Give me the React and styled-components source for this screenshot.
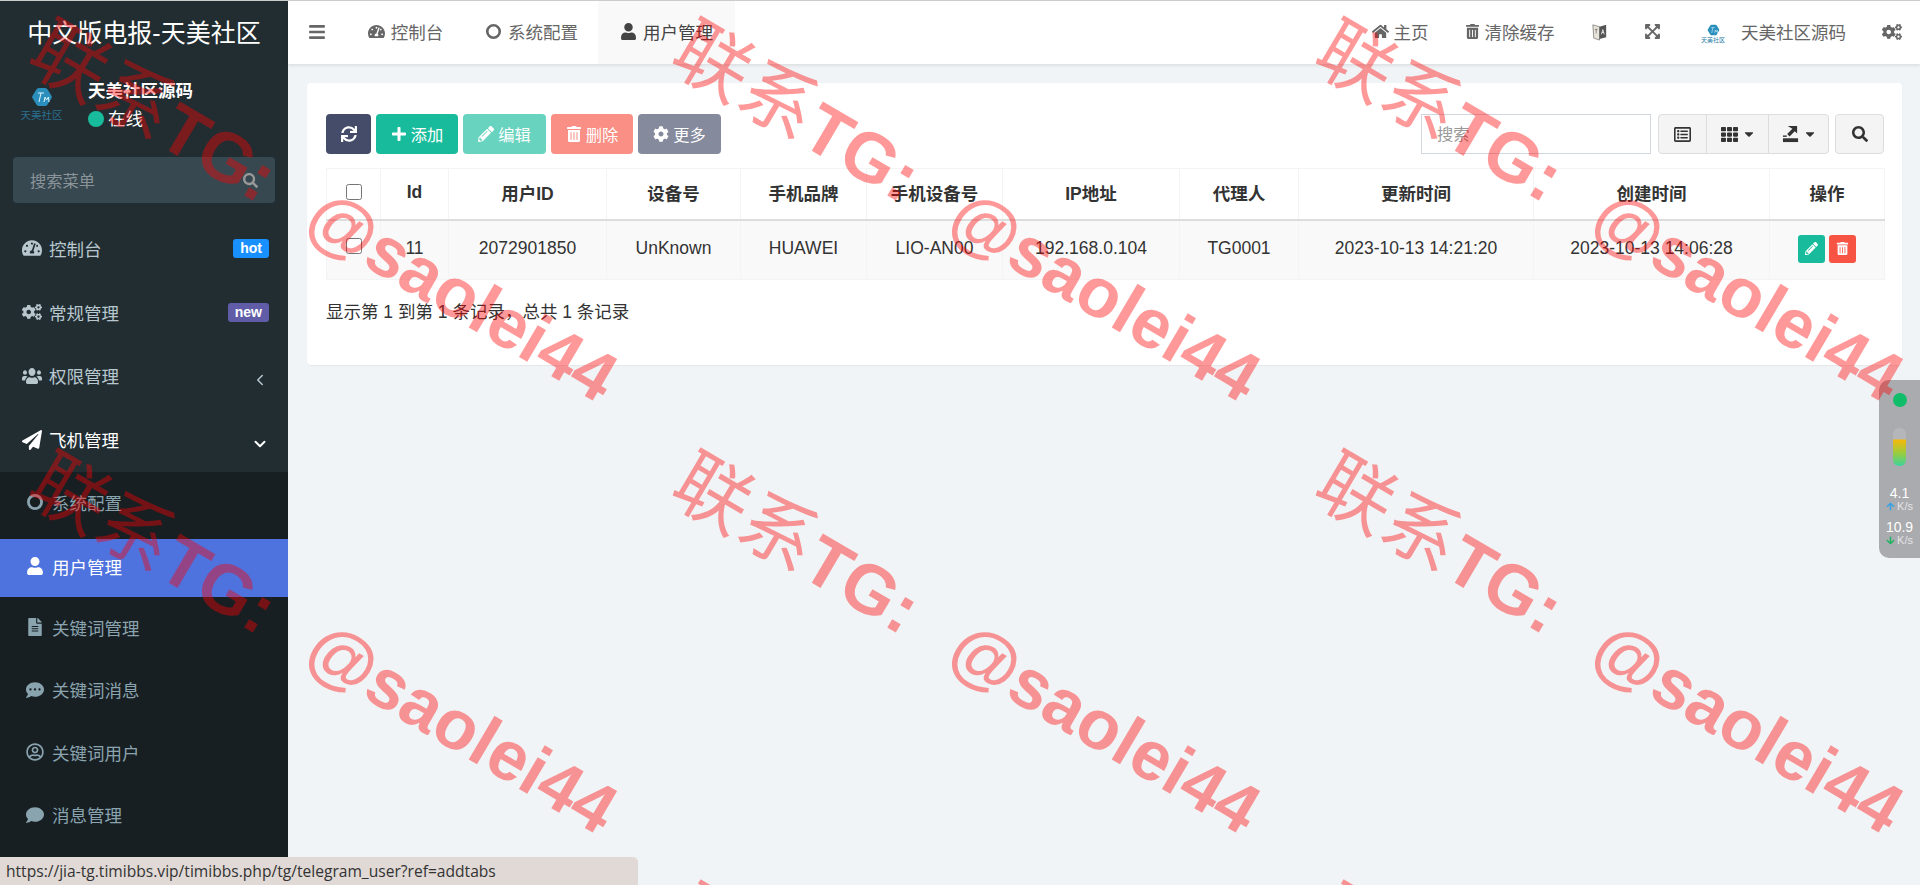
import React from 'react';
import styled, { createGlobalStyle } from 'styled-components';
import {
  FaBars, FaTachometerAlt, FaUser, FaHome, FaTrashAlt, FaExpandArrowsAlt, FaCogs, FaUsers,
  FaPaperPlane, FaFileAlt, FaCommentDots, FaRegUserCircle, FaComment, FaSearch,
  FaSync, FaPlus, FaPencilAlt, FaCog, FaTh, FaRegListAlt, FaCaretDown, FaArrowUp, FaArrowDown,
} from 'react-icons/fa';
import { FiChevronLeft, FiChevronDown } from 'react-icons/fi';

const GlobalStyle = createGlobalStyle`
  html, body { margin: 0; padding: 0; height: 100%; overflow: hidden; }
  body {
    font-family: "Liberation Sans", "Noto Sans CJK SC", sans-serif;
    font-size: 17.5px;
    color: #333;
    background: #f1f4f6;
  }
  * { box-sizing: border-box; }
`;

const Page = styled.div`
  height: 885px;
  border-top: 1px solid #ccc;
  display: flex;
  position: relative;
  overflow: hidden;
`;

/* sidebar */
const Sidebar = styled.aside`
  width: 288px;
  flex: none;
  background: #222d32;
  display: flex;
  flex-direction: column;
`;
const Brand = styled.div`
  height: 63px;
  padding-bottom: 3px;
  color: #fff;
  font-size: 25px;
  display: flex;
  align-items: center;
  justify-content: center;
`;
const UserPanel = styled.div`
  height: 93px;
  padding: 13px 0 0 20px;
  display: flex;
  gap: 25px;
`;
const LogoBox = styled.div`
  width: 43px;
  display: flex;
  flex-direction: column;
  align-items: center;
  margin-top: 10px;
  color: #2a6f8e;
  font-size: 10.5px;
  line-height: 12px;
  white-space: nowrap;
  svg { width: 22px; height: 20px; margin-bottom: 2px; }
`;
const UserInfo = styled.div`
  color: #fff;
  line-height: 28px;
`;
const UserName = styled.div`
  font-weight: 700;
`;
const Online = styled.div`
  display: flex;
  align-items: center;
  gap: 4px;
  &::before {
    content: "";
    width: 16px;
    height: 16px;
    border-radius: 50%;
    background: #18bc9c;
  }
`;
const MenuSearch = styled.div`
  margin: 0 13px 14px;
  height: 46px;
  background: #374850;
  border-radius: 4px;
  padding: 0 17px;
  display: flex;
  align-items: center;
  justify-content: space-between;
  color: #8a9499;
  font-size: 16.25px;
  svg { color: #999; width: 15px; height: 15px; }
`;
const MenuItem = styled.div`
  height: 63.75px;
  padding: 0 19px 1px 22px;
  display: flex;
  align-items: center;
  gap: 7px;
  color: ${p => (p.$open ? '#fff' : '#b8c7ce')};
  svg { width: 20px; height: 20px; flex: none; }
`;
const MenuLabel = styled.span`
  flex: 1;
`;
const TallUsers = styled(FaUsers)`
  transform: scaleY(1.15);
`;
const Badge = styled.span`
  height: 19px;
  padding: 0 7px;
  border-radius: 3px;
  background: ${p => p.$bg};
  color: #fff;
  font-size: 14px;
  font-weight: 700;
  line-height: 19px;
`;
const Arrow = styled.span`
  display: flex;
  margin-bottom: -8px;
  svg { width: 18px; height: 18px; stroke-width: ${p => p.$sw || 2}; }
`;
const SubMenu = styled.div`
  flex: 1;
  background: #181f23;
  padding-top: 3px;
`;
const SubItem = styled.div`
  height: 58px;
  margin-bottom: ${p => p.$gap}px;
  padding: 0 0 4px 26px;
  display: flex;
  align-items: center;
  gap: 8px;
  color: ${p => (p.$active ? '#fff' : '#8aa4af')};
  background: ${p => (p.$active ? '#4e72de' : 'transparent')};
  svg { width: 18px; height: 18px; flex: none; }
`;

/* main */
const Main = styled.main`
  flex: 1;
  min-width: 0;
`;
const Header = styled.header`
  height: 63px;
  background: #fff;
  box-shadow: 0 1px 4px rgba(0, 0, 0, .12);
  display: flex;
  align-items: stretch;
  color: #666;
`;
const HeaderButton = styled.div`
  display: flex;
  align-items: center;
  justify-content: center;
  gap: ${p => (p.$tight ? 5 : 6)}px;
  width: ${p => p.$w}px;
  padding-bottom: 2px;
  white-space: nowrap;
  background: ${p => (p.$current ? '#f9f9f9' : 'transparent')};
  color: ${p => (p.$current ? '#444' : '#666')};
  svg { width: ${p => p.$icon || 17}px; height: ${p => p.$icon || 17}px; flex: none; }
`;
const Spacer = styled.div`
  flex: 1;
`;
const HeadLogo = styled.div`
  width: 26px;
  display: flex;
  flex-direction: column;
  align-items: center;
  color: #2a7ea6;
  font-size: 6px;
  line-height: 7px;
  white-space: nowrap;
  margin: 4px 9px 0 0;
  svg { width: 13px; height: 12px; margin-bottom: 1px; }
`;
const Content = styled.div`
  padding: 19px 18px 0 19px;
`;
const Card = styled.section`
  height: 282px;
  background: #fff;
  border-radius: 4px;
  box-shadow: 0 1px 1px rgba(0, 0, 0, .05);
  padding: 31px 18px 0 19px;
`;
const Toolbar = styled.div`
  height: 40px;
  display: flex;
  align-items: stretch;
  gap: 5px;
  margin-bottom: 14px;
`;
const Btn = styled.div`
  width: ${p => p.$w}px;
  background: ${p => p.$bg};
  color: #fff;
  opacity: ${p => (p.$off ? .65 : 1)};
  border-radius: 4px;
  font-size: 16.25px;
  padding-bottom: 1px;
  display: flex;
  align-items: center;
  justify-content: center;
  gap: 4px;
  svg { width: 16px; height: 16px; flex: none; }
`;
const SearchInput = styled.div`
  width: 230px;
  margin-left: auto;
  border: 1px solid #d2d6de;
  padding: 0 0 2px 15px;
  display: flex;
  align-items: center;
  color: #999;
  font-size: 16.25px;
`;
const BtnGroup = styled.div`
  display: flex;
  margin: 0 1px 0 2px;
  border: 1px solid #ddd;
  border-radius: 4px;
  background: #f4f4f4;
`;
const GroupBtn = styled.div`
  width: ${p => p.$w}px;
  display: flex;
  align-items: center;
  justify-content: center;
  gap: 5px;
  color: #333;
  & + & { border-left: 1px solid #ddd; }
  svg { width: 17px; height: 17px; flex: none; }
`;
const SearchBtn = styled.div`
  width: 49px;
  border: 1px solid #ddd;
  border-radius: 4px;
  background: #f4f4f4;
  color: #333;
  display: flex;
  align-items: center;
  justify-content: center;
  svg { width: 16px; height: 16px; }
`;
const Caret = styled(FaCaretDown)`
  && { width: 12px; height: 14px; }
`;
const Table = styled.table`
  width: 1558px;
  border-collapse: collapse;
  table-layout: fixed;
  border: 1px solid #f4f4f4;
  th, td { border: 1px solid #f4f4f4; text-align: center; padding: 0 0 3px; }
  th { height: 51px; font-weight: 700; border-bottom: 2px solid #ddd; }
  td { height: 60px; background: #f9f9f9; }
`;
const Col = styled.col`
  width: ${p => p.$w}px;
`;
const Check = styled.input.attrs({ type: 'checkbox' })`
  width: 16px;
  height: 16px;
  margin: 0;
  vertical-align: middle;
  position: relative;
  top: ${p => p.$top}px;
`;
const Actions = styled.div`
  display: flex;
  justify-content: center;
  gap: 4px;
  margin-top: 1px;
`;
const ActionBtn = styled.span`
  width: 27px;
  height: 28px;
  border-radius: 3px;
  background: ${p => p.$bg};
  color: #fff;
  display: flex;
  align-items: center;
  justify-content: center;
  svg { width: 13px; height: 13px; }
`;
const Foot = styled.div`
  margin-top: 21px;
  line-height: 22px;
`;

/* overlays */
const SpeedWidget = styled.div`
  position: absolute;
  right: 0;
  top: 379px;
  width: 41px;
  height: 178px;
  background: #a9abae;
  border-radius: 10px 0 0 10px;
  display: flex;
  flex-direction: column;
  align-items: center;
  color: #fff;
  padding-top: 13px;
`;
const Dot = styled.div`
  width: 14px;
  height: 14px;
  border-radius: 50%;
  background: #10bd6a;
  margin-bottom: 21px;
`;
const Pill = styled.div`
  width: 13px;
  height: 38px;
  border-radius: 6px;
  background: linear-gradient(#b4b6b9 0 28%, #f2b90d 32%, #9ccc3c 65%, #3dd39c 100%);
  margin-bottom: 20px;
`;
const Speed = styled.div`
  font-size: 14px;
  line-height: 14px;
`;
const Unit = styled.div`
  display: flex;
  align-items: center;
  gap: 2px;
  font-size: 11px;
  line-height: 12px;
  color: #e4e4e6;
  margin-bottom: 8px;
  svg { width: 9px; height: 9px; color: ${p => p.$c}; }
`;
const StatusBar = styled.div`
  position: absolute;
  left: 0;
  bottom: 0;
  width: 638px;
  height: 28px;
  background: #e0d9d5;
  border-top-right-radius: 5px;
  padding-left: 6px;
  font-family: "Open Sans", sans-serif;
  font-size: 15.6px;
  line-height: 28px;
  color: #333;
  z-index: 3;
`;
const Watermarks = styled.div`
  position: absolute;
  inset: 0;
  z-index: 2;
  pointer-events: none;
  display: grid;
  grid-template-columns: repeat(3, 643px);
  grid-auto-rows: 432px;
  padding: 2px 0 0 37px;
`;
const Mark = styled.div`
  height: 80px;
  font-size: 76px;
  line-height: 80px;
  color: rgba(255, 0, 0, .4);
  white-space: nowrap;
  transform: rotate(30.5deg);
  transform-origin: left center;
`;
const MarkLatin = styled.span`
  font-family: "Liberation Sans", sans-serif;
  font-size: 70px;
  font-weight: 700;
  margin-left: ${p => p.$gap}px;
`;

const TmLogo = () => (
  <svg viewBox="0 0 22 20">
    <path d="M8 1h6a3 3 0 0 1 2.6 1.5l4 6.500a2 2 0 0 1 0 2l-4 6.500a3 3 0 0 1-2.600 1.500H8a3 3 0 0 1-2.600-1.500l-4-6.500a2 2 0 0 1 0-2l4-6.500A3 3 0 0 1 8 1z" fill="#2a8fbd" />
    <path d="M7 6h6M10 6l-2 9M13 15l1-5 1.500 3 2-3 .5 5" fill="none" stroke="#dff3fb" strokeWidth="1" />
  </svg>
);

const Ring = () => (
  <svg viewBox="0 0 18 18">
    <circle cx="9" cy="9" r="6.600" fill="none" stroke="currentColor" strokeWidth="2.800" />
  </svg>
);

const LangIcon = () => (
  <svg viewBox="0 0 16 20">
    <path d="M1 3l7 2v14l-6-2z" fill="#e9e4da" stroke="#777" strokeWidth=".8" />
    <path d="M8 5l7-2v13l-7 2z" fill="#555" />
    <path d="M10 13l1.500-5 1.500 5M10.600 11h1.800" fill="none" stroke="#fff" strokeWidth=".8" />
    <path d="M3 8h3M4.500 7v5" fill="none" stroke="#777" strokeWidth=".8" />
  </svg>
);

const ExportIcon = () => (
  <svg viewBox="0 0 18 18" fill="#333">
    <path d="M1 13h16v4H1z" />
    <path d="M7 1h10v8l-2.500-2.500L9 12 6.500 9.500 12 4z" transform="translate(-1 -1)" />
    <path d="M1 10h4v1.500H1z" />
  </svg>
);

const columns = [54, 68, 158, 134, 126, 136, 177, 119, 235, 236, 115];
const heads = ['Id', '用户ID', '设备号', '手机品牌', '手机设备号', 'IP地址', '代理人', '更新时间', '创建时间', '操作'];
const row = ['11', '2072901850', 'UnKnown', 'HUAWEI', 'LIO-AN00', '192.168.0.104', 'TG0001', '2023-10-13 14:21:20', '2023-10-13 14:06:28'];
const subMenu = [
  { icon: <Ring />, label: '系统配置', gap: 6 },
  { icon: <FaUser />, label: '用户管理', gap: 3, active: true },
  { icon: <FaFileAlt />, label: '关键词管理', gap: 4.5 },
  { icon: <FaCommentDots />, label: '关键词消息', gap: 4.5 },
  { icon: <FaRegUserCircle />, label: '关键词用户', gap: 4.5 },
  { icon: <FaComment />, label: '消息管理', gap: 4.5 },
];

export default function App() {
  return (
    <Page>
      <GlobalStyle />
      <Sidebar>
        <Brand>中文版电报-天美社区</Brand>
        <UserPanel>
          <LogoBox><TmLogo />天美社区</LogoBox>
          <UserInfo>
            <UserName>天美社区源码</UserName>
            <Online>在线</Online>
          </UserInfo>
        </UserPanel>
        <MenuSearch>搜索菜单<FaSearch /></MenuSearch>
        <MenuItem><FaTachometerAlt /><MenuLabel>控制台</MenuLabel><Badge $bg="#1890ff">hot</Badge></MenuItem>
        <MenuItem><FaCogs /><MenuLabel>常规管理</MenuLabel><Badge $bg="#605ca8">new</Badge></MenuItem>
        <MenuItem><TallUsers /><MenuLabel>权限管理</MenuLabel><Arrow $sw={2}><FiChevronLeft /></Arrow></MenuItem>
        <MenuItem $open><FaPaperPlane /><MenuLabel>飞机管理</MenuLabel><Arrow $sw={2.6}><FiChevronDown /></Arrow></MenuItem>
        <SubMenu>
          {subMenu.map(item => (
            <SubItem key={item.label} $active={item.active} $gap={item.gap}>{item.icon}{item.label}</SubItem>
          ))}
        </SubMenu>
      </Sidebar>
      <Main>
        <Header>
          <HeaderButton $w={58} $icon={18}><FaBars /></HeaderButton>
          <HeaderButton $w={119}><FaTachometerAlt />控制台</HeaderButton>
          <HeaderButton $w={133}><Ring />系统配置</HeaderButton>
          <HeaderButton $w={137} $current><FaUser />用户管理</HeaderButton>
          <Spacer />
          <HeaderButton $w={84} $tight><FaHome />主页</HeaderButton>
          <HeaderButton $w={135} $icon={15} $tight><FaTrashAlt />清除缓存</HeaderButton>
          <HeaderButton $w={45} $icon={19}><LangIcon /></HeaderButton>
          <HeaderButton $w={60} $icon={17}><FaExpandArrowsAlt /></HeaderButton>
          <HeaderButton $w={182}><HeadLogo><TmLogo />天美社区</HeadLogo>天美社区源码</HeaderButton>
          <HeaderButton $w={56} $icon={20}><FaCogs /></HeaderButton>
        </Header>
        <Content>
          <Card>
            <Toolbar>
              <Btn $w={45} $bg="#444c69"><FaSync /></Btn>
              <Btn $w={82} $bg="#18bc9c"><FaPlus />添加</Btn>
              <Btn $w={83} $bg="#18bc9c" $off><FaPencilAlt />编辑</Btn>
              <Btn $w={82} $bg="#f75444" $off><FaTrashAlt />删除</Btn>
              <Btn $w={83} $bg="#444c69" $off><FaCog />更多</Btn>
              <SearchInput>搜索</SearchInput>
              <BtnGroup>
                <GroupBtn $w={47}><FaRegListAlt /></GroupBtn>
                <GroupBtn $w={62}><FaTh /><Caret /></GroupBtn>
                <GroupBtn $w={60}><ExportIcon /><Caret /></GroupBtn>
              </BtnGroup>
              <SearchBtn><FaSearch /></SearchBtn>
            </Toolbar>
            <Table>
              <colgroup>
                {columns.map((w, i) => <Col key={i} $w={w} />)}
              </colgroup>
              <thead>
                <tr>
                  <th><Check $top={-1} readOnly /></th>
                  {heads.map(h => <th key={h}>{h}</th>)}
                </tr>
              </thead>
              <tbody>
                <tr>
                  <td><Check $top={-3} readOnly /></td>
                  {row.map(c => <td key={c}>{c}</td>)}
                  <td>
                    <Actions>
                      <ActionBtn $bg="#18bc9c"><FaPencilAlt /></ActionBtn>
                      <ActionBtn $bg="#f75444"><FaTrashAlt /></ActionBtn>
                    </Actions>
                  </td>
                </tr>
              </tbody>
            </Table>
            <Foot>显示第 1 到第 1 条记录，总共 1 条记录</Foot>
          </Card>
        </Content>
      </Main>
      <SpeedWidget>
        <Dot />
        <Pill />
        <Speed>4.1</Speed>
        <Unit $c="#35a3e8"><FaArrowUp />K/s</Unit>
        <Speed>10.9</Speed>
        <Unit $c="#19b35c"><FaArrowDown />K/s</Unit>
      </SpeedWidget>
      <Watermarks>
        {Array.from({ length: 9 }, (_, i) => (
          <Mark key={i}>联系<MarkLatin>TG:</MarkLatin><MarkLatin $gap={50}>@saolei44</MarkLatin></Mark>
        ))}
      </Watermarks>
      <StatusBar>https://jia-tg.timibbs.vip/timibbs.php/tg/telegram_user?ref=addtabs</StatusBar>
    </Page>
  );
}
